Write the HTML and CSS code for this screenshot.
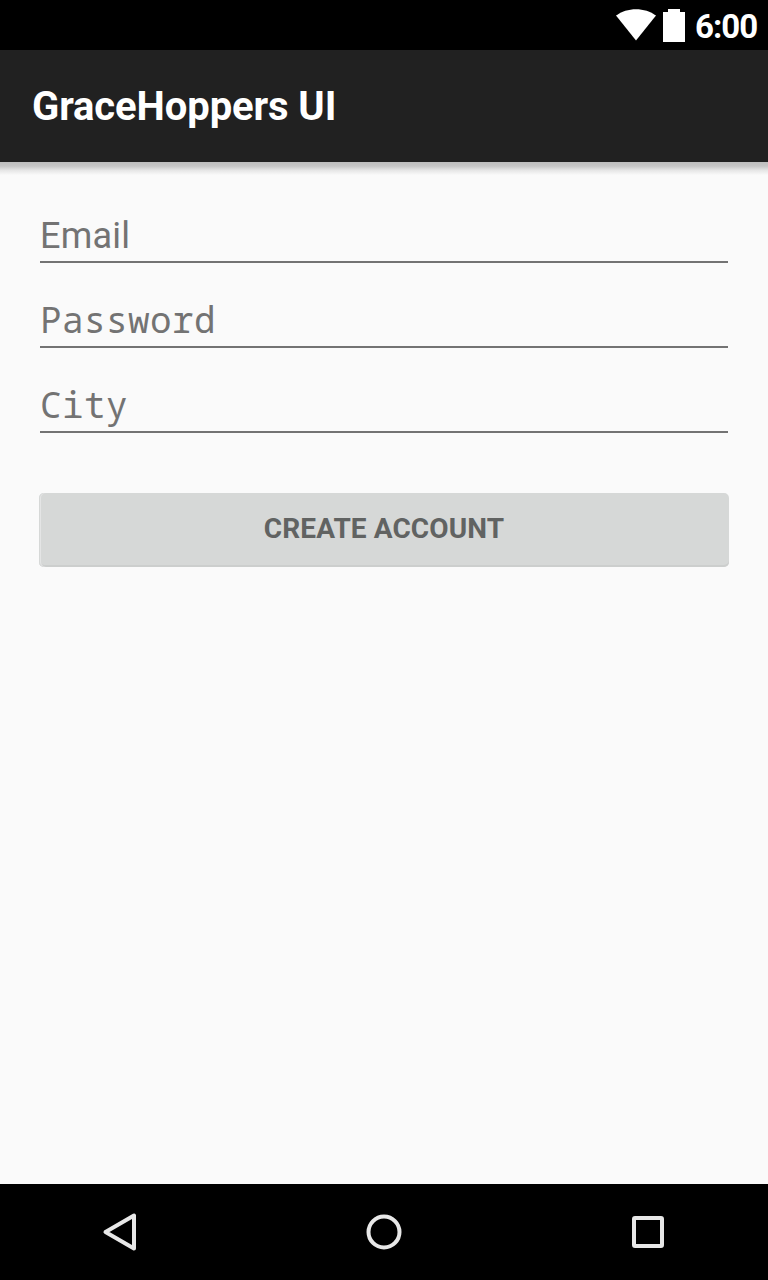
FILE: index.html
```html
<!DOCTYPE html>
<html lang="en">
<head>
<meta charset="utf-8">
<title>GraceHoppers UI</title>
<link rel="stylesheet" href="styles.css">
</head>
<body>
<div class="status-bar">
  <svg class="wifi" width="40" height="32" viewBox="0 0 40 32"><path d="M0 6.5C11-2 29-2 40 6.5L20 31.5Z" fill="#fff"/></svg>
  <svg class="battery" width="22" height="33" viewBox="0 0 22 33"><path d="M5 0H17V3H22V33H0V3H5Z" fill="#fff"/></svg>
  <span class="clock">6:00</span>
</div>
<header class="app-bar"><h1 class="title">GraceHoppers UI</h1></header>
<main class="content">
  <form class="form">
    <div class="field">Email</div>
    <div class="field mono">Password</div>
    <div class="field mono">City</div>
    <button class="submit" type="button">CREATE ACCOUNT</button>
  </form>
</main>
<nav class="nav-bar">
  <svg width="48" height="48" viewBox="0 0 48 48"><path d="M9.5 24L38 7.5V40.5Z"/></svg>
  <svg width="48" height="48" viewBox="0 0 48 48"><circle cx="24" cy="24" r="15.5"/></svg>
  <svg width="48" height="48" viewBox="0 0 48 48"><rect x="10" y="10" width="28" height="28" rx="1"/></svg>
</nav>
</body>
</html>
```
FILE: styles.css
```css
* { box-sizing: border-box; }
body {
  margin: 0;
  height: 1280px;
  display: flex;
  flex-direction: column;
  background: #fafafa;
  font-family: Roboto, sans-serif;
}
.status-bar {
  height: 50px;
  background: #000;
  display: flex;
  justify-content: flex-end;
  align-items: flex-start;
  padding: 9px 9px 0 0;
}
.battery { margin: 0 10px 0 8px; }
.wifi { margin-right: -1px; }
.clock {
  width: 64px;
  color: #fff;
  font-size: 33px;
  line-height: 36px;
  font-weight: 700;
  letter-spacing: -1px;
  white-space: nowrap;
}
.app-bar {
  height: 112px;
  background: #212121;
  display: flex;
  align-items: center;
  padding: 2px 0 0 32px;
}
.title {
  margin: 0;
  color: #fff;
  font-size: 40px;
  line-height: 48px;
  font-weight: 700;
  letter-spacing: -0.1px;
}
.content {
  flex: 1;
  padding: 0 39px;
  background: linear-gradient(#bebebe, #c6c6c6 4px, #e4e4e4 8px, #fafafa 13px);
}
.form {
  display: flex;
  flex-direction: column;
  padding-top: 48px;
}
.field {
  height: 53px;
  margin: 0 1px 32px;
  border-bottom: 2px solid #737373;
  color: #737373;
  font-size: 36px;
  line-height: 52px;
  letter-spacing: 0.2px;
}
.mono {
  font-family: "Noto Sans Mono", "DejaVu Sans Mono", monospace;
  line-height: 50px;
  letter-spacing: 0.4px;
}
.submit {
  height: 74px;
  margin-top: 28px;
  border: 0;
  border-radius: 5px;
  background: #d6d8d7;
  box-shadow: inset 1px 0 #d6d8d7, inset 2px 0 #e4e5e5, inset 0 -2px #cccecd;
  color: #616362;
  font: 700 28px/32px Roboto, sans-serif;
  letter-spacing: 0.1px;
  padding: 0 0 3px;
}
.nav-bar {
  height: 96px;
  background: #000;
  display: flex;
  justify-content: space-between;
  align-items: center;
  padding: 0 96px;
}
.nav-bar svg {
  fill: none;
  stroke: #e8e8e8;
  stroke-width: 4;
  stroke-linejoin: round;
}
```
